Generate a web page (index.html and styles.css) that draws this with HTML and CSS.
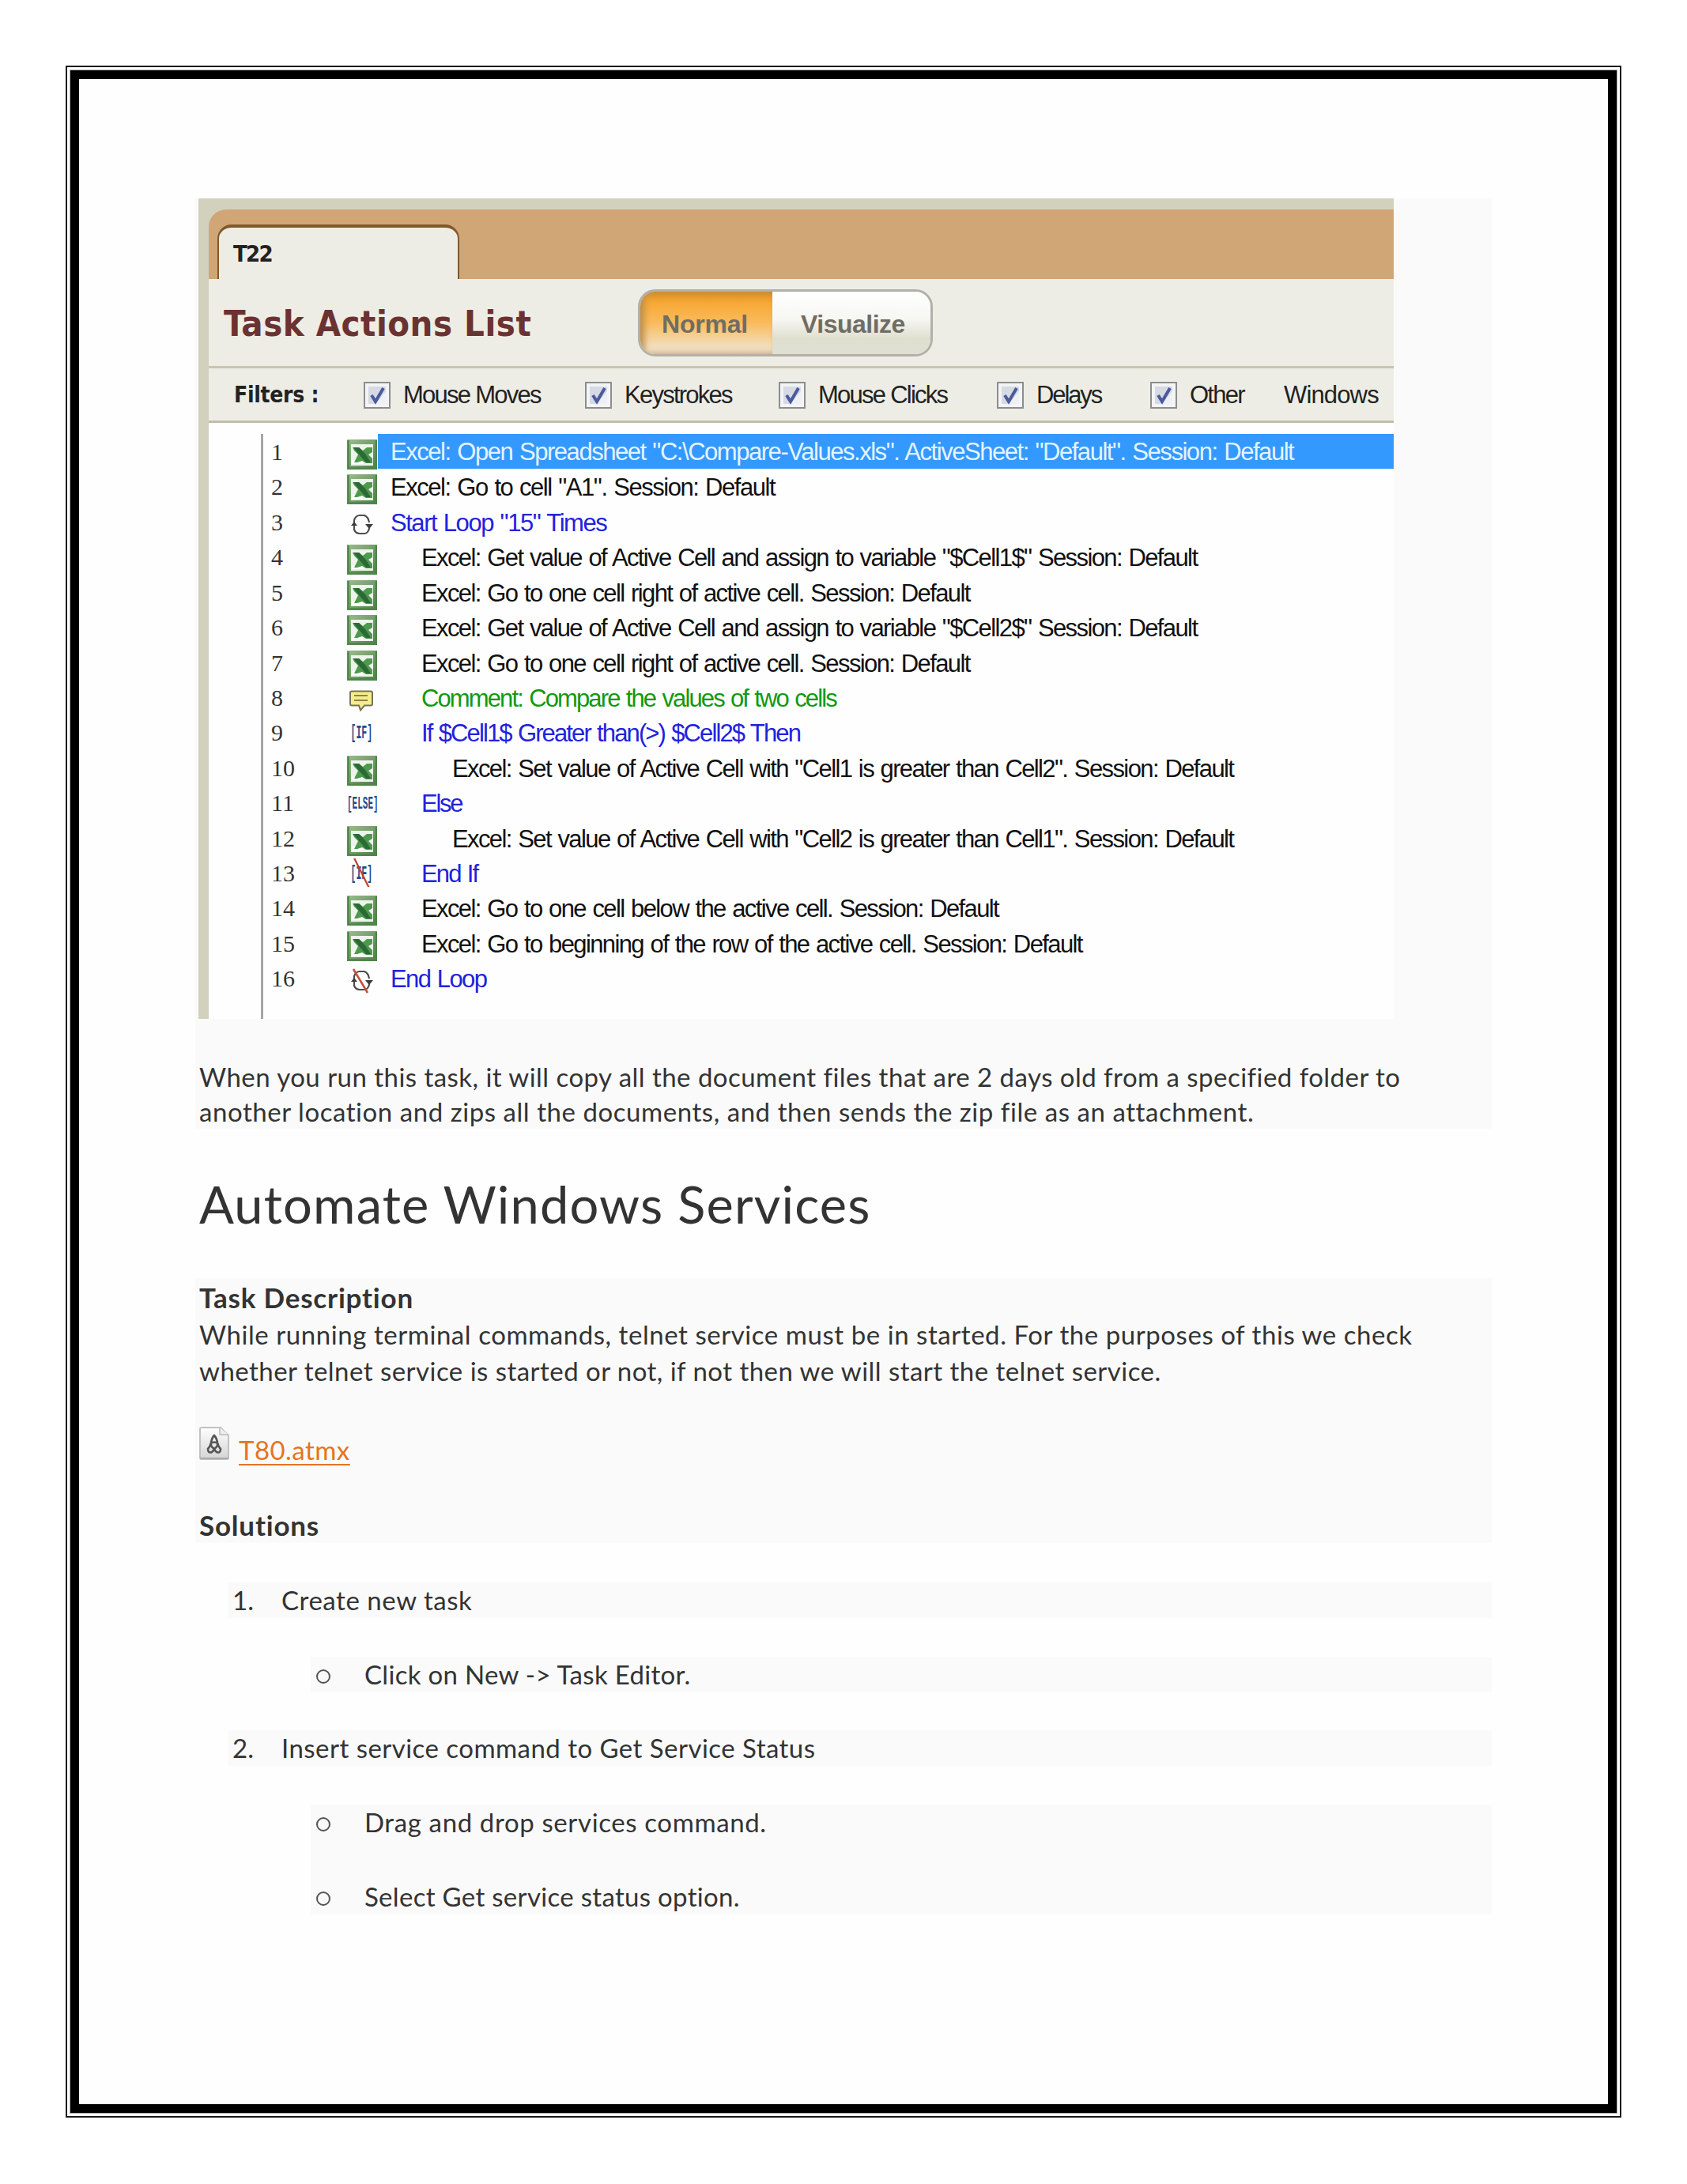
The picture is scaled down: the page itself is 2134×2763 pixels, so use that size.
FILE: index.html
```html
<!DOCTYPE html>
<html lang="en">
<head>
<meta charset="utf-8">
<title>Automate Windows Services</title>
<link rel="stylesheet" href="styles.css">
</head>
<body>
<svg width="0" height="0" class="defs">
  <defs>
    <linearGradient id="xg" x1="0" y1="0" x2="1" y2="1"><stop offset="0" stop-color="#9dbb90"/><stop offset="1" stop-color="#4b8044"/></linearGradient>
    <linearGradient id="dg" x1="0" y1="0" x2="0" y2="1"><stop offset="0" stop-color="#fff"/><stop offset="1" stop-color="#d4d4d4"/></linearGradient>
    <symbol id="xls" viewBox="0 0 38 38"><rect width="38" height="38" fill="url(#xg)"/><path d="M1.500 1V36.500H37M37 1V37" fill="none" stroke="#4f8549" stroke-width="2.500"/><rect x="5" y="6" width="28" height="27" fill="#eef4ec"/><path d="M6 26h14v5H6z" fill="#fff"/><path d="M7 10h8l5 4 5-4h7v6l-5 3 5 5v6h-8l-5-3-6 2H9l3-6 2-4-5-5z" fill="#4c9a4b"/><path d="M8 10l7 0 8 8 7 11-6 0-8-9z" fill="#2b6a37"/></symbol>
    <symbol id="loop" viewBox="0 0 38 38"><path d="M9 17V13Q11 7 16 7H22Q27 9 28 16M28 22V24Q26 30 22 30H16Q11 30 9 25V20" fill="none" stroke="#4c4c4c" stroke-width="2.200"/><path d="M5 20l4-5 4 5zM23 18h10l-5 6z" fill="#3c3c3c"/></symbol>
    <symbol id="note" viewBox="0 0 38 38"><path d="M6 7.500h24q2 0 2 2v14q0 2-2 2h-8l-5 6-2-6H6q-2 0-2-2v-14q0-2 2-2z" fill="#f5ee88" stroke="#77735a" stroke-width="2"/><path d="M9 13h17M9 19h17" stroke="#8d8350" stroke-width="2"/></symbol>
    <symbol id="box" viewBox="0 0 34 34"><rect x="1" y="1" width="32" height="32" fill="#f3f4f6" stroke="#8c8d90" stroke-width="2"/><rect x="6" y="6" width="22" height="22" fill="#d6dae3"/><path d="M15 28h13V12z" fill="#eef0f5"/><path d="M10 17l5 8L25 8" fill="none" stroke="#4a5a9c" stroke-width="4"/></symbol>
  </defs>
</svg>
<main class="sheet">
 <div class="inner">
  <section class="block">
   <div class="shot">
    <div class="tabs"><div class="tab">T22</div></div>
    <div class="head"><h2 class="title">Task Actions List</h2>
     <div class="toggle"><div class="on">Normal</div><div class="off">Visualize</div></div></div>
    <div class="filters">
     <b class="fl">Filters :</b>
     <label class="f"><svg><use href="#box"/></svg>Mouse Moves</label>
     <label class="f"><svg><use href="#box"/></svg>Keystrokes</label>
     <label class="f"><svg><use href="#box"/></svg>Mouse Clicks</label>
     <label class="f tight"><svg><use href="#box"/></svg>Delays</label>
     <label class="f"><svg><use href="#box"/></svg>Other</label>
     <span class="win">Windows</span>
    </div>
    <div class="list"><div class="rows">
     <div class="row wide sel"><i>1</i><svg><use href="#xls"/></svg><p>Excel: Open Spreadsheet "C:\Compare-Values.xls". ActiveSheet: "Default". Session: Default</p></div>
     <div class="row wide"><i>2</i><svg><use href="#xls"/></svg><p>Excel: Go to cell "A1". Session: Default</p></div>
     <div class="row wide blue"><i>3</i><svg><use href="#loop"/></svg><p>Start Loop "15" Times</p></div>
     <div class="row in1"><i>4</i><svg><use href="#xls"/></svg><p>Excel: Get value of Active Cell and assign to variable "$Cell1$" Session: Default</p></div>
     <div class="row in1"><i>5</i><svg><use href="#xls"/></svg><p>Excel: Go to one cell right of active cell. Session: Default</p></div>
     <div class="row in1"><i>6</i><svg><use href="#xls"/></svg><p>Excel: Get value of Active Cell and assign to variable "$Cell2$" Session: Default</p></div>
     <div class="row in1"><i>7</i><svg><use href="#xls"/></svg><p>Excel: Go to one cell right of active cell. Session: Default</p></div>
     <div class="row in1 narrow green"><i>8</i><svg><use href="#note"/></svg><p>Comment: Compare the values of two cells</p></div>
     <div class="row in1 narrow blue"><i>9</i><em>[IF]</em><p>If $Cell1$ Greater than(&gt;) $Cell2$ Then</p></div>
     <div class="row in2"><i>10</i><svg><use href="#xls"/></svg><p>Excel: Set value of Active Cell with "Cell1 is greater than Cell2". Session: Default</p></div>
     <div class="row in1 narrowest blue"><i>11</i><em class="else">[ELSE]</em><p>Else</p></div>
     <div class="row in2"><i>12</i><svg><use href="#xls"/></svg><p>Excel: Set value of Active Cell with "Cell2 is greater than Cell1". Session: Default</p></div>
     <div class="row in1 narrow blue"><i>13</i><em class="end">[IF]</em><p>End If</p></div>
     <div class="row in1"><i>14</i><svg><use href="#xls"/></svg><p>Excel: Go to one cell below the active cell. Session: Default</p></div>
     <div class="row in1"><i>15</i><svg><use href="#xls"/></svg><p>Excel: Go to beginning of the row of the active cell. Session: Default</p></div>
     <div class="row blue"><i>16</i><svg viewBox="0 0 38 38"><use href="#loop"/><path d="M8 4L26 34" stroke="#c4503c" stroke-width="2.500"/></svg><p>End Loop</p></div>
    </div></div>
   </div>
   <p class="para first"><span class="run-a">When you run this task, it will copy all the document files that are 2 days old from a specified folder to</span><br><span class="run-b">another location and zips all the documents, and then sends the zip file as an attachment.</span></p>
  </section>
  <h1 class="h1">Automate Windows Services</h1>
  <section class="block two">
   <h3>Task Description</h3>
   <p class="para"><span class="run-b">While running terminal commands, telnet service must be in started. For the purposes of this we check</span><br><span class="run-a">whether telnet service is started or not, if not then we will start the telnet service.</span></p>
   <div class="file"><svg viewBox="0 0 38 42"><path d="M1 3q0-2 2-2h24l10 10v28q0 2-2 2H3q-2 0-2-2z" fill="url(#dg)" stroke="#c2c2c2" stroke-width="2"/><path d="M1 40h36" stroke="#aaa" stroke-width="2"/><path d="M26 1v9h11" fill="#eee" stroke="#bbb" stroke-width="1.500"/><path d="M19 11q-3 3-4 9-1 5-4 8 0 6 5 4 3-2 3-6 0 4 3 6 5 2 5-4-3-3-4-8-1-6-4-9zM15 21q4-3 8 0 1 4-4 7-5-3-4-7" fill="none" stroke="#555" stroke-width="2.600"/></svg><a>T80.atmx</a></div>
   <h3 class="sol">Solutions</h3>
  </section>
  <ol class="steps">
   <li class="l1"><b>1.</b><span class="run-b">Create new task</span></li>
   <li class="l2"><b></b><span class="run-c">Click on New -&gt; Task Editor.</span></li>
   <li class="l1"><b>2.</b><span class="run-a">Insert service command to Get Service Status</span></li>
   <li class="l2 join"><b></b><span class="run-d">Drag and drop services command.</span></li>
   <li class="l2"><b></b><span class="run-c">Select Get service status option.</span></li>
  </ol>
 </div>
</main>
</body>
</html>
```
FILE: styles.css
```css
* { box-sizing: border-box; }
body { margin: 0; background: #fff; color: #333; font-family: Lato, "Open Sans", sans-serif; }
p, h1, h2, h3, ol { margin: 0; padding: 0; font-weight: 400; }
.defs { display: block; height: 0; }

/* Double page frame */
.sheet { width: 1968px; height: 2596px; margin: 83px 0 0 83px; border: 2px solid #1a1a1a; padding: 3px; }
.inner { height: 100%; border: 12px solid #000; outline: 1px solid #aaa; outline-offset: -1px; background: #fefefe; padding: 151px 0 0 147px; }
.block { width: 1640px; height: 1177px; background: #fafafa; padding-left: 4px; }

/* Task editor window */
.shot { width: 1512px; height: 1038px; background: #d2d1bd; padding: 14px 0 0 13px; font-family: "Liberation Sans", Arial, sans-serif; color: #222; }
.tabs { height: 88px; background: #d0a676; border-top-left-radius: 22px; padding: 19px 0 0 11px; }
.tab { width: 306px; height: 69px; background: #eeede5; border: 3px solid #80582c; border-width: 4px 2px 0; border-radius: 18px 18px 0 0; padding-left: 18px; font: bold 29px/67px "DejaVu Sans Condensed", "DejaVu Sans", sans-serif; letter-spacing: -1.7px; }
.head { height: 110px; background: #eeede5; display: flex; align-items: flex-start; }
.title { width: 543px; padding-left: 19px; font: bold 45px/114px "DejaVu Sans Condensed", "DejaVu Sans", sans-serif; letter-spacing: .5px; color: #6b3232; }
.toggle { display: flex; width: 373px; height: 85px; margin-top: 13px; border: 3px solid #b1b0a9; border-radius: 22px; overflow: hidden; font-weight: bold; font-size: 32px; line-height: 82px; color: #6f6d64; }
.on { width: 167px; padding-left: 27px; letter-spacing: -.2px; background: linear-gradient(#d98f24, #f7a937 18%, #fabb5c 50%, #f3dcb6 85%, #ece4d2); box-shadow: inset 5px 0 8px #b98d4a; }
.off { flex: 1; padding-left: 36px; letter-spacing: -.5px; background: linear-gradient(#fff, #f6f6f2 45%, #dfdfd0 75%, #e0e0d2); }
.filters { height: 72px; background: #eeede5; border-top: 3px solid #c6c5ae; border-bottom: 3px solid #bfbea9; display: grid; grid-template-columns: 196px 280px 245px 276px 194px 169px 1fr; font-size: 31px; line-height: 68px; letter-spacing: -1.75px; }
.filters svg { width: 34px; height: 34px; flex: none; }
.filters .fl { padding-left: 32px; font: bold 28px/68px "DejaVu Sans Condensed", "DejaVu Sans", sans-serif; letter-spacing: -.3px; }
.f { display: flex; align-items: center; gap: 16px; white-space: nowrap; }
.filters .tight { letter-spacing: -2.1px; }
.win { letter-spacing: -.85px; }
.list { height: 754px; background: #fefefe; padding: 14px 0 0 66px; }
.rows { height: 740px; border-left: 3px solid #a5a5a5; }
.row { height: 44.43px; display: grid; grid-template-columns: 106px 39px 1fr; color: #111; font-size: 31px; line-height: 47px; white-space: nowrap; letter-spacing: -1.61px; word-spacing: 1.5px; }
.row i { padding-left: 10px; font: 30px/46px "Liberation Serif", serif; letter-spacing: 0; color: #333; }
.row svg { width: 38px; height: 38px; margin-top: 7px; }
.row p { padding-left: 16px; }
.row.in1 p { padding-left: 55px; }
.row.in2 p { padding-left: 94px; }
.wide { letter-spacing: -1.46px; }
.narrow { letter-spacing: -1.88px; }
.narrowest { letter-spacing: -2.3px; }
.sel p { background: #3399ff; color: #e4f3ff; height: 44px; line-height: 46px; }
.blue { color: #2222dd; }
.green { color: #109a10; }
.row em { position: relative; font: bold 23px/49px "Liberation Mono", monospace; color: #1f4a8c; width: 56px; padding-left: 9px; letter-spacing: 0; transform: scaleX(.5); transform-origin: 0 0; }
.row em.else { font-size: 22px; padding-left: 0; width: 80px; }
.row .end::after { content: ""; position: absolute; left: 34px; top: 4px; width: 5px; height: 36px; background: #c4402c; transform: skewX(45deg); }

/* Body copy */
.para { font-size: 33px; line-height: 44px; padding-left: 1px; }
.first { padding-top: 51px; }
.run-a { letter-spacing: .46px; }
.run-b { letter-spacing: .55px; }
.run-c { letter-spacing: .3px; }
.run-d { letter-spacing: .62px; }
.h1 { height: 189px; padding: 55px 0 0 5px; font-size: 65px; line-height: 80px; letter-spacing: 1.17px; }
.two { height: 335px; padding-left: 5px; }
.two .para { line-height: 46px; padding: 1px 0 0; }
h3 { font-size: 35px; font-weight: bold; line-height: 46px; padding-top: 1px; letter-spacing: .8px; }
.file { display: flex; height: 148px; padding-top: 48px; gap: 12px; }
.file svg { width: 38px; height: 42px; }
.file a { color: #e47424; font-size: 33px; line-height: 58px; letter-spacing: .45px; text-decoration: underline; text-underline-offset: 5px; text-decoration-thickness: 2px; }
.steps { list-style: none; padding-top: 50px; font-size: 33px; line-height: 45px; }
.steps li { display: flex; height: 45px; margin-bottom: 48.7px; background: #fafafa; }
.steps .l1 { width: 1599px; margin-left: 41px; }
.l1 b { width: 68px; padding-left: 6px; font-weight: 400; }
.steps .l2 { width: 1494px; margin-left: 146px; line-height: 44px; }
.steps .join { height: 93.7px; margin-bottom: 0; }
.l2 b { width: 18px; height: 18px; border: 2px solid #555; border-radius: 50%; margin: 16px 43px 0 7px; }
```
